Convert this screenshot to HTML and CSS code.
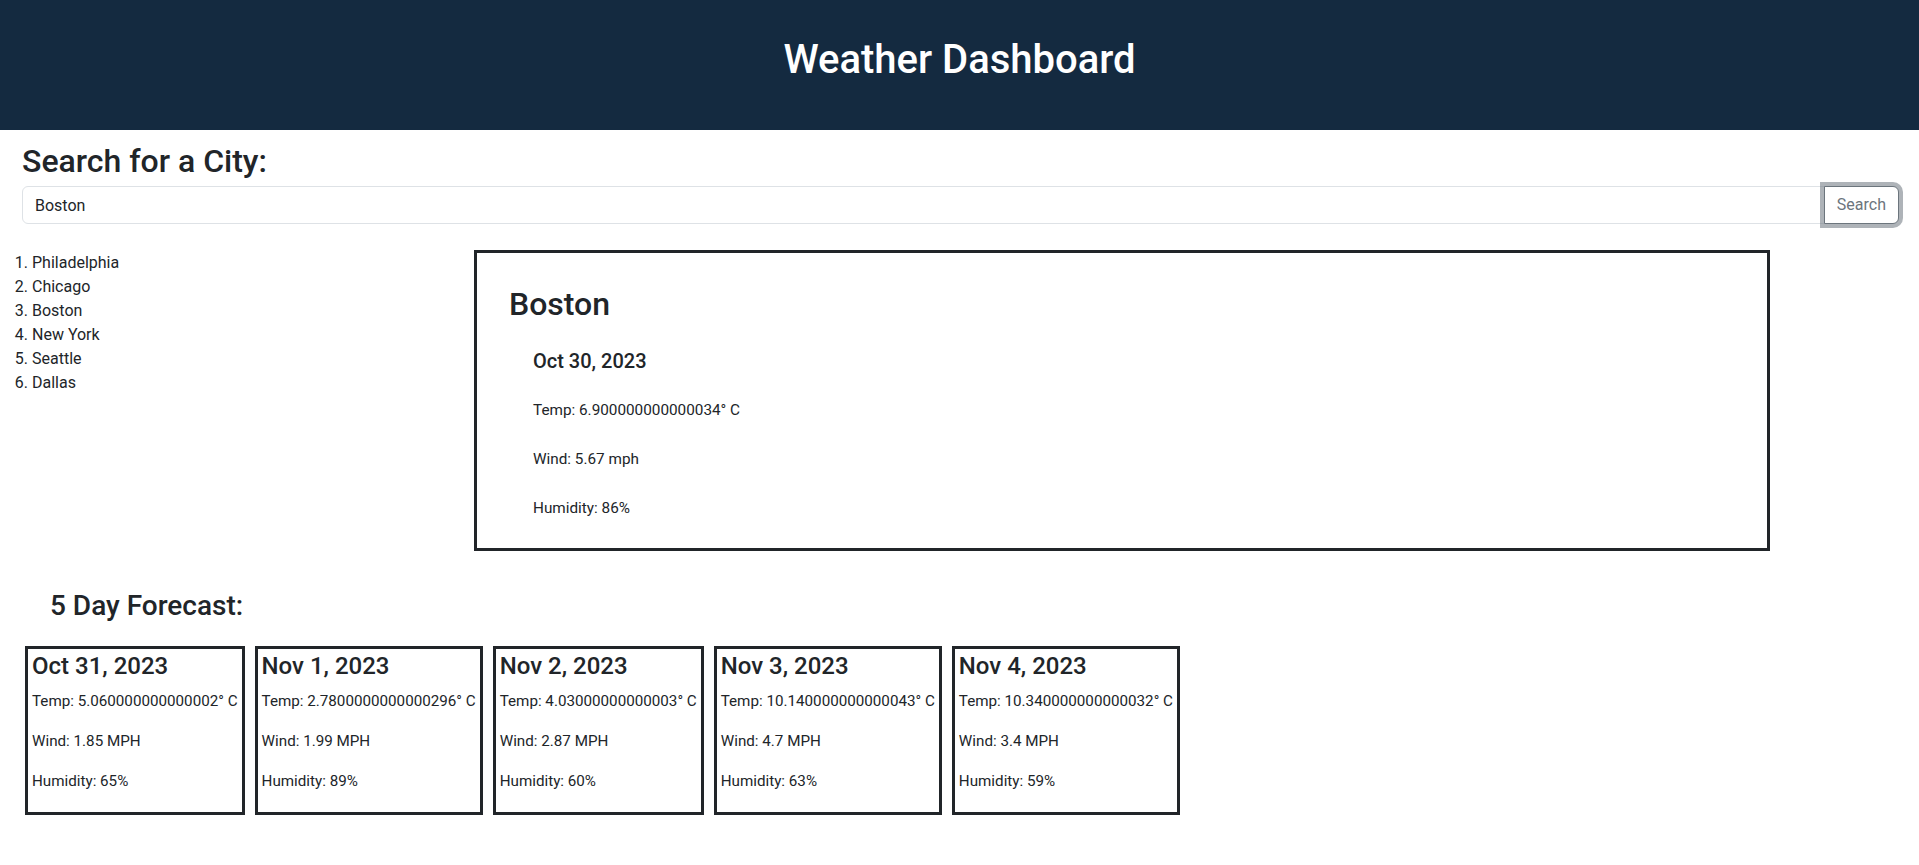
FILE: index.html
```html
<!DOCTYPE html>
<html lang="en">
<head>
<meta charset="utf-8">
<title>Weather Dashboard</title>
<link rel="stylesheet" href="styles.css">
</head>
<body>
<header class="site-header">
  <h1 class="site-title">Weather Dashboard</h1>
</header>
<main class="page">
  <section class="search">
    <h2 class="search-title">Search for a City:</h2>
    <div class="input-group">
      <input class="city-input" type="text" value="Boston">
      <button class="search-btn" type="button">Search</button>
    </div>
  </section>

  <div class="content-row">
    <ol class="history">
      <li>Philadelphia</li>
      <li>Chicago</li>
      <li>Boston</li>
      <li>New York</li>
      <li>Seattle</li>
      <li>Dallas</li>
    </ol>
    <section class="current">
      <h2 class="current-city">Boston</h2>
      <div class="current-details">
        <h5 class="current-date">Oct 30, 2023</h5>
        <p class="current-line">Temp: 6.900000000000034° C</p>
        <p class="current-line">Wind: 5.67 mph</p>
        <p class="current-line">Humidity: 86%</p>
      </div>
    </section>
  </div>

  <section class="forecast">
    <h3 class="forecast-title">5 Day Forecast:</h3>
    <div class="cards">
      <div class="card">
        <h4 class="card-date">Oct 31, 2023</h4>
        <p class="card-line">Temp: 5.060000000000002° C</p>
        <p class="card-line">Wind: 1.85 MPH</p>
        <p class="card-line">Humidity: 65%</p>
      </div>
      <div class="card">
        <h4 class="card-date">Nov 1, 2023</h4>
        <p class="card-line">Temp: 2.7800000000000296° C</p>
        <p class="card-line">Wind: 1.99 MPH</p>
        <p class="card-line">Humidity: 89%</p>
      </div>
      <div class="card">
        <h4 class="card-date">Nov 2, 2023</h4>
        <p class="card-line">Temp: 4.03000000000003° C</p>
        <p class="card-line">Wind: 2.87 MPH</p>
        <p class="card-line">Humidity: 60%</p>
      </div>
      <div class="card">
        <h4 class="card-date">Nov 3, 2023</h4>
        <p class="card-line">Temp: 10.140000000000043° C</p>
        <p class="card-line">Wind: 4.7 MPH</p>
        <p class="card-line">Humidity: 63%</p>
      </div>
      <div class="card">
        <h4 class="card-date">Nov 4, 2023</h4>
        <p class="card-line">Temp: 10.340000000000032° C</p>
        <p class="card-line">Wind: 3.4 MPH</p>
        <p class="card-line">Humidity: 59%</p>
      </div>
    </div>
  </section>
</main>
</body>
</html>
```

FILE: styles.css
```css
* { box-sizing: border-box; }

body {
  margin: 0;
  font-family: Roboto, "Liberation Sans", Arial, sans-serif;
  font-size: 16px;
  line-height: 24px;
  color: #212529;
  background: #fff;
}

.site-header {
  background: #142a40;
  height: 130px;
  padding-top: 36px;
  text-align: center;
}

.site-title {
  margin: 0;
  color: #fff;
  font-size: 40px;
  font-weight: 500;
  line-height: 48px;
}

.search {
  padding: 0 20px 0 22px;
}

.search-title {
  margin: 12px 0 6px;
  font-size: 32px;
  font-weight: 500;
  line-height: 38.4px;
}

.input-group {
  display: flex;
}

.city-input {
  flex: 1;
  height: 38px;
  padding: 6px 12px;
  border: 1px solid #dee2e6;
  border-radius: 6px 0 0 6px;
  font-family: inherit;
  font-size: 16px;
  color: #212529;
  outline: none;
}

.search-btn {
  position: relative;
  margin-left: -1px;
  height: 38px;
  padding: 6px 12px;
  border: 1px solid #6c757d;
  border-radius: 0 6px 6px 0;
  background: #fff;
  color: #6c757d;
  font-family: inherit;
  font-size: 16px;
  line-height: 24px;
  box-shadow: 0 0 0 4px rgba(108, 117, 125, 0.55);
}

.content-row {
  display: flex;
  align-items: flex-start;
  margin-top: 26px;
}

.history {
  flex: 0 0 474px;
  margin: 0;
  padding: 1px 0 0 32px;
}

.current {
  flex: 0 0 1296px;
  border: 3px solid #212529;
  padding: 32px 32px 28px 32px;
}

.current-city {
  margin: 0;
  font-size: 32px;
  font-weight: 500;
  line-height: 38.4px;
}

.current-details {
  display: flex;
  flex-direction: column;
  gap: 25px;
  margin-top: 25px;
  padding-left: 24px;
}

.current-date {
  margin: 0;
  font-size: 20px;
  font-weight: 500;
  line-height: 24px;
}

.current-line {
  margin: 0;
  font-size: 15.3px;
}

.forecast {
  margin-top: 38px;
}

.forecast-title {
  margin: 0;
  padding-left: 50px;
  font-size: 28px;
  font-weight: 500;
  line-height: 33.6px;
}

.cards {
  display: flex;
  align-items: flex-start;
  gap: 10px;
  margin-top: 24px;
  padding-left: 25px;
}

.card {
  border: 3px solid #212529;
  padding: 3px 4px;
}

.card-date {
  margin: 0 0 8px;
  font-size: 24px;
  font-weight: 500;
  line-height: 28.8px;
}

.card-line {
  margin: 0 0 16px;
  font-size: 15.2px;
}
```
